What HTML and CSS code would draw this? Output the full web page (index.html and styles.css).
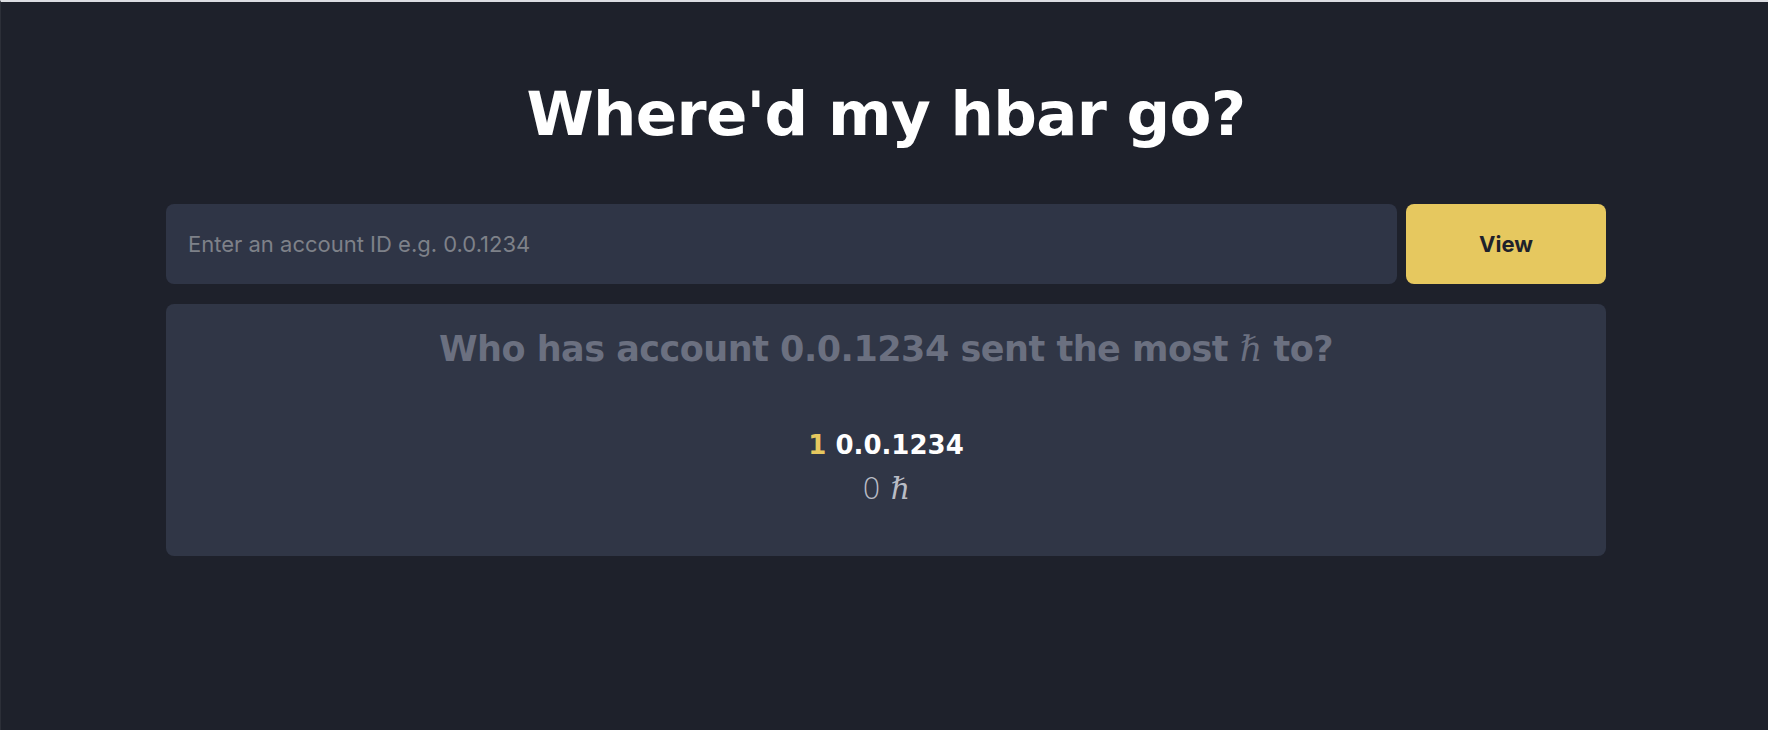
FILE: index.html
```html
<!DOCTYPE html>
<html>
<head>
<meta charset="utf-8">
<link rel="stylesheet" href="styles.css">
</head>
<body>
<div class="page">
  <h1 class="title">Where'd my hbar go?</h1>
  <div class="search">
    <input class="search-input" type="text" placeholder="Enter an account ID e.g. 0.0.1234">
    <button class="search-btn">View</button>
  </div>
  <section class="card">
    <h2 class="card-title">Who has account 0.0.1234 sent the most <span class="hbar">ℏ</span> to?</h2>
    <ol class="ranking">
      <li class="rank-item">
        <div class="rank-line"><span class="rank-num">1</span> <span class="rank-id">0.0.1234</span></div>
        <div class="rank-amount">0 <span class="hbar">ℏ</span></div>
      </li>
    </ol>
  </section>
</div>
</body>
</html>
```
FILE: styles.css
```css
html, body {
  margin: 0;
  padding: 0;
  height: 100%;
  background: #1e212b;
}
.page {
  box-sizing: border-box;
  min-height: 100%;
  border-top: 2px solid #dcdde2;
  border-left: 1px solid #2c2f38;
  padding: 0 162px 0 165px;
  display: flex;
  flex-direction: column;
  font-family: "DejaVu Sans", sans-serif;
}
.title {
  margin: 72px 0 0;
  text-align: center;
  color: #ffffff;
  font-family: "DejaVu Sans", sans-serif;
  font-weight: 700;
  font-size: 61px;
  line-height: 80px;
  letter-spacing: -0.7px;
}
.search {
  margin-top: 50px;
  display: flex;
  gap: 9px;
  height: 80px;
}
.search-input {
  flex: 1;
  border: none;
  outline: none;
  border-radius: 8px;
  background: #2f3546;
  padding: 0 22px;
  font-family: Inter, "Liberation Sans", sans-serif;
  font-size: 22px;
  color: #e0e0e0;
}
.search-input::placeholder {
  color: #7e8189;
}
.search-btn {
  width: 200px;
  border: none;
  border-radius: 8px;
  background: #e6c85f;
  color: #1e212b;
  font-family: Inter, "Liberation Sans", sans-serif;
  font-weight: 700;
  font-size: 22px;
}
.card {
  margin-top: 20px;
  height: 252px;
  box-sizing: border-box;
  background: #303646;
  border-radius: 8px;
  padding-top: 23px;
  text-align: center;
}
.card-title {
  margin: 0;
  color: #6b7080;
  font-family: "DejaVu Sans", sans-serif;
  font-weight: 700;
  font-size: 35px;
  line-height: 44px;
  letter-spacing: -0.5px;
}
.hbar {
  font-family: "DejaVu Serif", serif;
  font-style: italic;
  font-weight: 400;
}
.ranking {
  list-style: none;
  margin: 52px 0 0;
  padding: 0;
}
.rank-line {
  font-family: "DejaVu Sans", sans-serif;
  font-weight: 700;
  font-size: 26px;
  line-height: 44px;
  color: #ffffff;
}
.rank-num {
  color: #e6c85f;
}
.rank-amount {
  font-family: "DejaVu Sans", sans-serif;
  font-weight: 300;
  font-size: 30px;
  line-height: 44px;
  color: #b9bcc5;
}
```
